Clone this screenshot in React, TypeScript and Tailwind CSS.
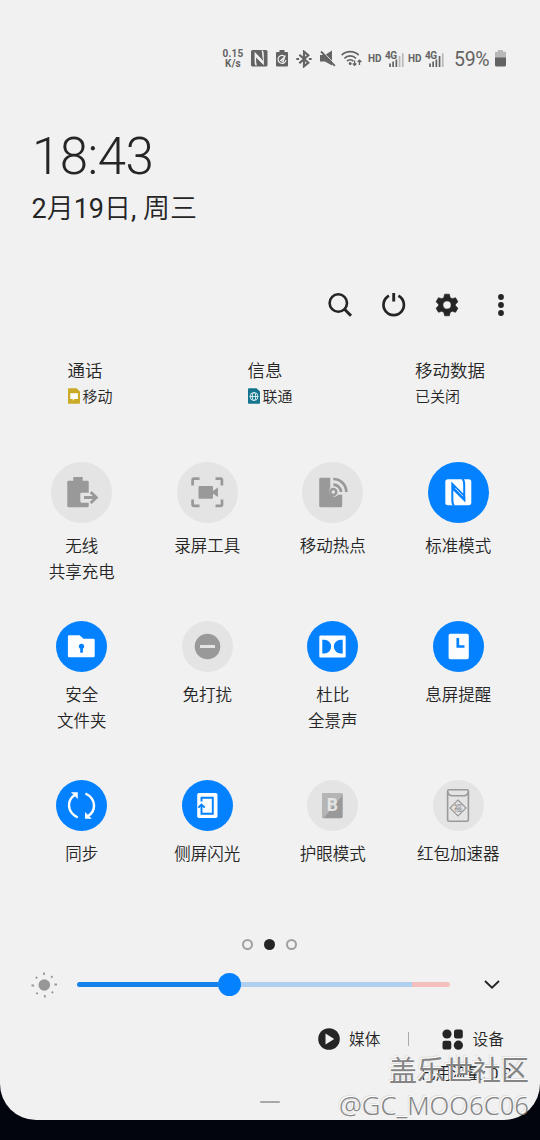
import type { ReactNode } from "react"
import clsx from "clsx"

interface TileProps {
  label: string[]
  icon: ReactNode
  active?: boolean
  large?: boolean
}

function Tile({ label, icon, active, large }: TileProps) {
  const size = large ? 61 : 51
  return (
    <div className="flex h-[159px] flex-col items-center">
      <div
        className={clsx(
          "shrink-0 rounded-full",
          large ? "size-[61px]" : "size-[51px]",
          active ? "bg-[#0381fe] text-[#fbfdff]" : "bg-[#e4e4e4] text-[#999]"
        )}
      >
        <svg viewBox={`0 0 ${size} ${size}`} className="size-full" fill="currentColor">
          {icon}
        </svg>
      </div>
      <div className="mt-[11px] text-center text-[16.5px] leading-[25.5px] font-[350]">
        {label.map((line) => (
          <div key={line}>{line}</div>
        ))}
      </div>
    </div>
  )
}

const BLUE = "#0381fe"
const OFF = "#e4e4e4"

const tiles: TileProps[] = [
  {
    label: ["无线", "共享充电"],
    large: true,
    icon: (
      <>
        <path d="M22.300 15h9.400v3.700h4.600q1.400 0 1.400 1.400v10.600h-7q-1.400 0-1.400 1.400v7.200q0 1.400 1.400 1.400h7v3.200q0 1.400-1.400 1.400H17.700q-1.400 0-1.400-1.400V20.100q0-1.400 1.400-1.400h4.600z" />
        <path d="M33 35.500h11.500M39.700 30l5.700 5.500-5.700 5.500" fill="none" stroke="currentColor" strokeWidth="2.800" />
      </>
    ),
  },
  {
    label: ["录屏工具"],
    large: true,
    icon: (
      <>
        <path
          d="M15.600 23.500v-5.500q0-1.400 1.400-1.400h5.500M38.500 16.600h5q1.400 0 1.400 1.400v5.500M45 37.500v4.900q0 1.400-1.400 1.400h-5.100M22.500 43.800H17q-1.400 0-1.400-1.400v-4.900"
          fill="none"
          stroke="currentColor"
          strokeWidth="2.700"
        />
        <rect x="21.500" y="24" width="14.500" height="12.700" rx="1" />
        <path d="M35 29.500l6-4v9.400l-6-4z" />
      </>
    ),
  },
  {
    label: ["移动热点"],
    large: true,
    icon: (
      <>
        <path d="M18.700 15.700h9.600v10a5.400 5.400 0 0 0 3 8.900q3 .4 4.900-1.900h4v11q0 1.500-1.500 1.500h-20q-1.500 0-1.500-1.500v-26.500q0-1.500 1.500-1.500z" />
        <circle cx="31.300" cy="30" r="3" fill="none" stroke="currentColor" strokeWidth="2.400" />
        <path d="M31.300 22.700a7.700 7.700 0 0 1 7.700 7.300M31.300 17a13 13 0 0 1 13 13" fill="none" stroke="currentColor" strokeWidth="2.700" />
      </>
    ),
  },
  {
    label: ["标准模式"],
    large: true,
    active: true,
    icon: (
      <>
        <rect x="17.300" y="17.200" width="26" height="26" rx="2.600" />
        <path d="M23.300 19.500L37.200 33.500v6.800L25.300 28.500v9q0 3.500 1.500 6h-2.300q-1.200-2-1.200-5z" fill={BLUE} />
        <path d="M37.200 40.500V22q0-3-1.200-5h-2.300q1.500 2.500 1.500 6v9z" fill={BLUE} />
        <path d="M27.300 26.200l7.600 8" stroke="currentColor" strokeWidth="0.800" />
      </>
    ),
  },
  {
    label: ["安全", "文件夹"],
    active: true,
    icon: (
      <>
        <path d="M13.300 14.300h10.200l4 3.500h9.800q1.400 0 1.400 1.400v15.700q0 1.400-1.400 1.400h-24q-1.400 0-1.400-1.400V15.700q0-1.400 1.400-1.400z" />
        <circle cx="25.500" cy="25.300" r="2.600" fill={BLUE} />
        <path d="M24.200 25h2.700v6.700h-2.700z" fill={BLUE} />
      </>
    ),
  },
  {
    label: ["免打扰"],
    icon: (
      <>
        <circle cx="25.500" cy="25.500" r="12.800" />
        <rect x="18" y="24" width="15" height="3" fill={OFF} />
      </>
    ),
  },
  {
    label: ["杜比", "全景声"],
    active: true,
    icon: (
      <>
        <rect x="12.300" y="14.500" width="26.400" height="22" rx="1.200" />
        <path d="M15.300 18.700h2a6.900 6.900 0 0 1 0 13.800h-2zM35.700 18.700h-2a6.900 6.900 0 0 0 0 13.800h2z" fill={BLUE} />
      </>
    ),
  },
  {
    label: ["息屏提醒"],
    active: true,
    icon: (
      <>
        <rect x="15.600" y="12.700" width="20.200" height="25.600" rx="1.800" />
        <path d="M24.800 17v8.500h6.700" fill="none" stroke={BLUE} strokeWidth="2.700" />
      </>
    ),
  },
  {
    label: ["同步"],
    active: true,
    icon: (
      <>
        <path
          d="M21.700 37.500C10.500 32 10.500 20 19.500 14.500M29.500 13.500C40.500 19 40.500 31 31.500 36.500"
          fill="none"
          stroke="currentColor"
          strokeWidth="2.500"
        />
        <path d="M15 12.300h6.800v6.800zM29 32v6.800h6.800z" />
      </>
    ),
  },
  {
    label: ["侧屏闪光"],
    active: true,
    icon: (
      <>
        <rect x="15.200" y="13" width="20.300" height="25" rx="1.800" />
        <path d="M19.500 21.500v-3.700h11.300v16H19.500v-9" fill="none" stroke={BLUE} strokeWidth="1.900" />
        <path d="M16.300 27.700l3.200-3.200 3.200 3.200" fill="none" stroke={BLUE} strokeWidth="1.900" />
      </>
    ),
  },
  {
    label: ["护眼模式"],
    icon: (
      <>
        <rect x="15" y="13" width="20.700" height="25.200" rx="1.600" />
        <path d="M16.600 13H34q1.700 0 1.700 2L16.500 38.200q-1.500 0-1.500-1.600v-22q0-1.600 1.600-1.600z" fill="#b5b5b5" />
        <text x="25.400" y="31" textAnchor="middle" fontSize="17.500" fontWeight="700" fontFamily="Roboto, sans-serif" fill={OFF}>
          B
        </text>
      </>
    ),
  },
  {
    label: ["红包加速器"],
    icon: (
      <>
        <g fill="none" stroke="currentColor" strokeWidth="1.600">
          <rect x="14.600" y="9.800" width="20.800" height="31.400" rx="1.500" />
          <path d="M14.600 12q1 3.700 4.600 3.700h11.600q3.600 0 4.600-3.700" />
          <path d="M25 20l8 8-8 8-8-8z" strokeWidth="1.200" />
        </g>
        <text x="25" y="31" textAnchor="middle" fontSize="8" fontWeight="500" fontFamily="'Noto Sans CJK SC', sans-serif">
          福
        </text>
      </>
    ),
  },
]

function Signal({ bars }: { bars: number }) {
  return (
    <svg viewBox="0 0 20 18" className="h-[18px] w-5" fill="#636363">
      <text x="0" y="8.700" fontSize="10" fontWeight="700" fontFamily="Roboto, sans-serif" textLength="12">
        4G
      </text>
      <path d="M4.200 13.500h1.700v3.500H4.200zM7.300 11.500H9V17H7.300zM10.500 9.500h1.700V17h-1.700z" />
      <path d="M13.700 6h1.700v11h-1.700z" fillOpacity={bars > 3 ? 1 : 0.4} />
      <path d="M16.900 3.200h1.700V17h-1.700z" fillOpacity={0.4} />
    </svg>
  )
}

function StatusBar() {
  return (
    <div className="flex h-6 items-center pt-px pl-[222px] text-[#636363]">
      <div className="w-[22px] text-center text-[10px] leading-[9.500px] font-bold tracking-[0.2px]">
        <div>0.15</div>
        <div>K/s</div>
      </div>
      <svg viewBox="0 0 17 17" className="ml-[7px] size-[17px]" fill="currentColor">
        <rect width="16.500" height="16.500" rx="1.500" />
        <path d="M3.600 1.800L12.800 11.500v3.700L5 7.500q0 5.500.8 8H4.500q-.9-1.500-.9-4z" fill="#f1f1f1" />
        <path d="M12.800 15V4.500q0-2.500-.9-4h-1.300q.8 2.500.8 6z" fill="#f1f1f1" />
      </svg>
      <svg viewBox="0 0 12 17" className="ml-2 h-[17px] w-3" fill="currentColor">
        <path d="M3.500 0h5v2H11q1 0 1 1v12.500q0 1-1 1H1q-1 0-1-1V3q0-1 1-1h2.500z" />
        <path d="M9.300 7A4 4 0 1 0 10 10M4.700 10.500l4-3.500-1.500 4.500z" fill="none" stroke="#f1f1f1" strokeWidth="1.200" />
      </svg>
      <svg viewBox="0 0 16 18" className="ml-2 h-[18px] w-4" fill="none" stroke="currentColor" strokeWidth="2.200">
        <path d="M3.300 4.800l9 8L8 16.300V1.700l4.300 3.500-9 8" />
        <path d="M.3 9h2.800M12.800 9h2.800" />
      </svg>
      <svg viewBox="0 0 16 17" className="ml-2 h-[17px] w-4" fill="currentColor">
        <path d="M0 5h5L12 .5v15L5 11.500H0z" />
        <path d="M2.300 1l13.200 13.800" stroke="#f1f1f1" strokeWidth="1" />
        <path d="M1 1.500l13.800 14.300" stroke="currentColor" strokeWidth="1.900" />
      </svg>
      <svg viewBox="0 0 22 17" className="ml-[5px] h-[17px] w-[22px]" fill="none" stroke="currentColor" strokeWidth="1.700">
        <path d="M.7 5.200a12 12 0 0 1 17 0M3.400 8.300a8.300 8.300 0 0 1 11.600 0M6 11.200a4.600 4.600 0 0 1 6.400 0" />
        <circle cx="9.200" cy="13.600" r="1.500" fill="currentColor" stroke="none" />
        <path d="M13.600 10.500v4.500M11.800 13.500l1.800 1.900 1.800-1.900M18.500 15v-4.500M16.700 12l1.800-1.900 1.800 1.900" strokeWidth="1.300" />
      </svg>
      <span className="ml-[5px] w-[14px] text-[10px] font-bold">HD</span>
      <div className="ml-[3px]">
        <Signal bars={3} />
      </div>
      <span className="ml-[3px] w-[14px] text-[10px] font-bold">HD</span>
      <div className="ml-[3px]">
        <Signal bars={4} />
      </div>
      <span className="ml-[9px] w-[37px] pt-[2px] text-[19.500px] tracking-[-0.3px]">59%</span>
      <svg viewBox="0 0 11 17" className="ml-1 h-[17px] w-[11px]" fill="#636363">
        <path d="M3 0h5v1.700h3V8H0V1.700h3z" fillOpacity="0.400" />
        <path d="M0 7.500h11V15q0 1.500-1.500 1.500h-8Q0 16.500 0 15z" />
      </svg>
    </div>
  )
}

function Actions() {
  return (
    <div className="mt-[63px] mb-px flex h-[29px] items-center pl-[327px]">
      <svg viewBox="0 0 26 26" className="size-[26px]" fill="none" stroke="currentColor" strokeWidth="2.600">
        <circle cx="11.300" cy="11" r="8.700" />
        <path d="M17.300 17l6.700 6.700" strokeWidth="3" />
      </svg>
      <svg viewBox="0 0 26 26" className="ml-[28px] size-[26px]" fill="none" stroke="currentColor" strokeWidth="2.700">
        <path d="M8 3.800a10.200 10.200 0 1 0 9.400 0" />
        <path d="M12.700 1v8.500" strokeWidth="2.900" />
      </svg>
      <svg viewBox="0 0 24 24" className="ml-[27px] size-[26px]" fill="currentColor">
        <path
          fillRule="evenodd"
          d="M9.800 2h4.400l.7 3.100 1.900 1.100 3.100-.9 2.200 3.800-2.300 2.200v1.400l2.300 2.200-2.200 3.800-3.100-.9-1.900 1.100-.7 3.100H9.800l-.7-3.100-1.900-1.100-3.100.9-2.200-3.800 2.300-2.200v-1.400L1.900 9.100l2.200-3.800 3.100.9 1.900-1.100zM12 8.200a3.800 3.800 0 1 0 0 7.600 3.800 3.800 0 0 0 0-7.600z"
          stroke="currentColor"
          strokeWidth="0.600"
          strokeLinejoin="round"
        />
      </svg>
      <svg viewBox="0 0 6 24" className="ml-[38px] h-6 w-1.5" fill="currentColor">
        <circle cx="3" cy="4" r="2.900" />
        <circle cx="3" cy="12" r="2.900" />
        <circle cx="3" cy="20" r="2.900" />
      </svg>
    </div>
  )
}

function SimCard({ color, children }: { color: string; children: ReactNode }) {
  return (
    <svg viewBox="0 0 12 16" className="mr-[3px] mb-[3px] h-4 w-3">
      <path d="M1 .3h7.500L12 3.500V15q0 .8-.8.800H.8Q0 15.800 0 15V1.300Q0 .3 1 .3z" fill={color} />
      {children}
    </svg>
  )
}

function Sims() {
  return (
    <div className="mt-[38px] flex pl-[67.500px] font-[350]">
      <div className="w-[180px]">
        <div className="text-[17.500px] leading-[26px]">通话</div>
        <div className="flex items-center text-[15px] leading-[27px]">
          <SimCard color="#c9ab27">
            <path d="M2.300 5.300h7.600v5.800H6.300l-1.600 1.700v-1.700H2.300z" fill="#fff" />
          </SimCard>
          移动
        </div>
      </div>
      <div className="w-[167.500px]">
        <div className="text-[17.500px] leading-[26px]">信息</div>
        <div className="flex items-center text-[15px] leading-[27px]">
          <SimCard color="#15758f">
            <g fill="none" stroke="#e6f3f6" strokeWidth="0.900">
              <circle cx="6" cy="8.500" r="4" />
              <ellipse cx="6" cy="8.500" rx="1.800" ry="4" />
              <path d="M2 8.500h8" />
            </g>
          </SimCard>
          联通
        </div>
      </div>
      <div>
        <div className="text-[17.500px] leading-[26px]">移动数据</div>
        <div className="text-[15px] leading-[27px]">已关闭</div>
      </div>
    </div>
  )
}

function Brightness() {
  return (
    <div className="mt-[22px] flex h-6 items-center pl-[31px]">
      <svg viewBox="0 0 26 26" className="mt-[2px] size-[26px] text-[#979797]" fill="currentColor">
        <circle cx="13.300" cy="13" r="5.800" />
        <path
          d="M13 .5v2.600M13.800 23v2.600M.5 13.500h2.600M23.500 12.500h2.600M4.800 5l1.400 1.300M20.200 5.500l1.300-1.300M5.400 22l1.300-1.300M20.700 19.700l1.400 1.300"
          stroke="currentColor"
          strokeWidth="1.800"
        />
      </svg>
      <div className="ml-[20px] flex w-[373px] items-center">
        <div className="h-[5px] w-[141px] rounded-l-full bg-[#1581ea]" />
        <div className="z-10 -mr-px size-[23px] shrink-0 rounded-full bg-[#0381fe]" />
        <div className="h-[5px] flex-1 bg-[#afd0ee]" />
        <div className="h-[5px] w-[38px] rounded-r-full bg-[#f4c0bd]" />
      </div>
      <svg viewBox="0 0 16 10" className="mt-[2px] ml-[34px] h-[10px] w-4" fill="none" stroke="currentColor" strokeWidth="1.900">
        <path d="M1 1l7 6.800L15 1" />
      </svg>
    </div>
  )
}

function Footer() {
  return (
    <div className="mt-[30px] flex h-[26px] items-center pl-[318px] text-[15.700px] font-[350]">
      <svg viewBox="0 0 22 22" className="size-[22px]">
        <circle cx="11" cy="11" r="10.800" fill="currentColor" />
        <path d="M7.500 5.500v11l8.700-5.500z" fill="#f1f1f1" />
      </svg>
      <span className="ml-[9px] w-8 pt-[2px]">媒体</span>
      <span className="ml-[27px] h-[14px] w-px bg-[#aaa]" />
      <svg viewBox="0 0 21 21" className="ml-[33px] size-[21px]" fill="currentColor">
        <circle cx="5" cy="5" r="4.600" />
        <rect x="12" y="0.600" width="8.800" height="8.800" rx="2.200" />
        <rect x="0.500" y="11.800" width="8.800" height="8.800" rx="2.200" />
        <circle cx="16.400" cy="16.200" r="4.600" />
      </svg>
      <span className="ml-[9.500px] pt-[2px]">设备</span>
    </div>
  )
}

export default function App() {
  return (
    <div className="relative h-[1140px] w-[540px] overflow-hidden bg-[#02050d] font-[Roboto,'Noto_Sans_CJK_SC',sans-serif] text-[#252525]">
      <div className="flex h-[1120px] flex-col rounded-b-[36px] bg-[#f1f1f1] pt-[46px]">
        <StatusBar />
        <div className="mt-[57px] pl-8 text-[51px] leading-[60px] font-light tracking-[-0.5px]">18:43</div>
        <div className="mt-1 pl-[31.500px] text-[27px] leading-9 font-[350]">
          <span className="font-normal">2</span>月<span className="font-normal">19</span>日
          <span className="font-normal">, </span>周三
        </div>
        <Actions />
        <Sims />
        <div className="mt-[51px] ml-[19px] grid w-[502px] grid-cols-4">
          {tiles.map((tile) => (
            <Tile key={tile.label[0]} {...tile} />
          ))}
        </div>
        <div className="flex h-[11px] items-center gap-[11px] pl-[242px]">
          <span className="size-[11px] rounded-full border-2 border-[#a0a0a0]" />
          <span className="size-[11px] rounded-full bg-[#252525]" />
          <span className="size-[11px] rounded-full border-2 border-[#a0a0a0]" />
        </div>
        <Brightness />
        <Footer />
        <div className="mt-3 pr-7 text-right text-[15.500px] leading-5">已用流量: 0 B</div>
        <div className="mt-[17px] ml-[260px] h-[2px] w-5 rounded-full bg-[#a8a8a8]" />
      </div>

      <div className="absolute right-[11px] bottom-[16px] text-right font-['Noto_Sans','Noto_Sans_CJK_SC',sans-serif] whitespace-nowrap text-[#858585] [text-shadow:-1px_-1px_0_#fff,-2px_-2px_0_#e0e0e0]">
        <div className="text-[28px] leading-9">盖乐世社区</div>
        <div className="text-[25.700px] leading-9 font-[350]">@GC_MOO6C06</div>
      </div>
    </div>
  )
}
